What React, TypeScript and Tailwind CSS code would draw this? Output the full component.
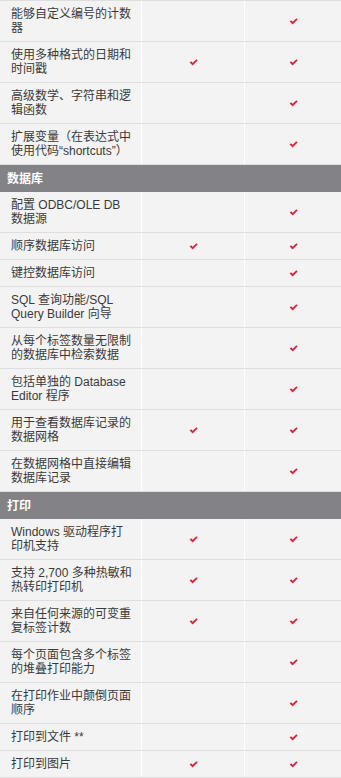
import React from "react";

type Row =
  | { kind: "header"; title: string }
  | { kind: "row"; lines: string[]; a: boolean; b: boolean };

const rows: Row[] = [
  { kind: "row", lines: ["能够自定义编号的计数", "器"], a: false, b: true },
  { kind: "row", lines: ["使用多种格式的日期和", "时间戳"], a: true, b: true },
  { kind: "row", lines: ["高级数学、字符串和逻", "辑函数"], a: false, b: true },
  { kind: "row", lines: ["扩展变量（在表达式中", "使用代码“shortcuts”）"], a: false, b: true },
  { kind: "header", title: "数据库" },
  { kind: "row", lines: ["配置 ODBC/OLE DB", "数据源"], a: false, b: true },
  { kind: "row", lines: ["顺序数据库访问"], a: true, b: true },
  { kind: "row", lines: ["键控数据库访问"], a: false, b: true },
  { kind: "row", lines: ["SQL 查询功能/SQL", "Query Builder 向导"], a: false, b: true },
  { kind: "row", lines: ["从每个标签数量无限制", "的数据库中检索数据"], a: false, b: true },
  { kind: "row", lines: ["包括单独的 Database", "Editor 程序"], a: false, b: true },
  { kind: "row", lines: ["用于查看数据库记录的", "数据网格"], a: true, b: true },
  { kind: "row", lines: ["在数据网格中直接编辑", "数据库记录"], a: false, b: true },
  { kind: "header", title: "打印" },
  { kind: "row", lines: ["Windows 驱动程序打", "印机支持"], a: true, b: true },
  { kind: "row", lines: ["支持 2,700 多种热敏和", "热转印打印机"], a: true, b: true },
  { kind: "row", lines: ["来自任何来源的可变重", "复标签计数"], a: true, b: true },
  { kind: "row", lines: ["每个页面包含多个标签", "的堆叠打印能力"], a: false, b: true },
  { kind: "row", lines: ["在打印作业中颠倒页面", "顺序"], a: false, b: true },
  { kind: "row", lines: ["打印到文件 **"], a: false, b: true },
  { kind: "row", lines: ["打印到图片"], a: true, b: true },
];

function Check() {
  return (
    <svg width="9" height="7" viewBox="0 0 9 7" className="block">
      <path d="M0.6 3.4 L2.1 2.2 L3.6 3.7 L7.4 0.3 L8.6 1.4 L3.6 6.4 Z" fill="#d8263f" />
    </svg>
  );
}

export default function App() {
  return (
    <div
      className="w-[341px] bg-[#f3f3f3] border-t border-[#dedede] text-[12px] leading-[14px] text-[#3a3a3a]"
      style={{ fontFamily: '"Liberation Sans", "Noto Sans CJK SC", sans-serif' }}
    >
      {rows.map((r, i) =>
        r.kind === "header" ? (
          <div
            key={i}
            className="h-[27px] bg-[#838286] text-white font-bold flex items-center pl-[7px]"
          >
            {r.title}
          </div>
        ) : (
          <div key={i} className="grid grid-cols-[141px_102px_96px] gap-x-px bg-white border-b border-[#dedede]">
            <div className="bg-[#f3f3f3] py-[6px] pl-[11px] whitespace-nowrap">
              {r.lines.map((l, j) => (
                <div key={j}>{l}</div>
              ))}
            </div>
            <div className="bg-[#f3f3f3] flex items-center justify-center">{r.a && <Check />}</div>
            <div className="bg-[#f3f3f3] flex items-center justify-center">{r.b && <Check />}</div>
          </div>
        )
      )}
    </div>
  );
}
